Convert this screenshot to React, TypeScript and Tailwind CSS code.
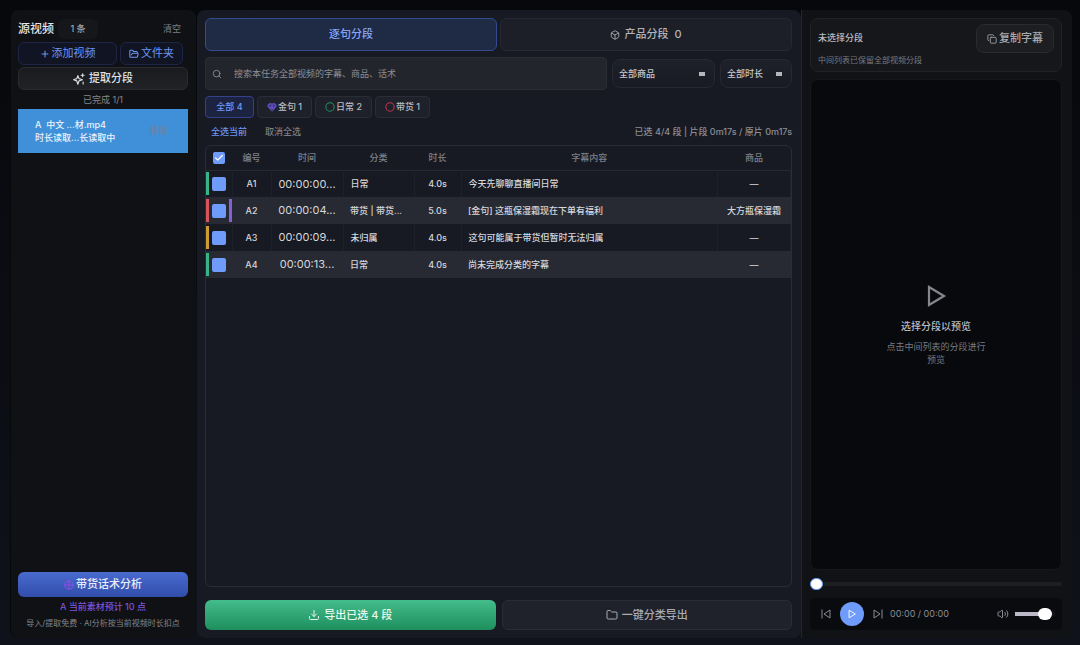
import React, { useState } from 'react';
import {
  Box,
  Check,
  Circle,
  Copy,
  Download,
  Folder,
  FolderOpen,
  Plus,
  Search,
  Volume2,
} from 'lucide-react';

interface Segment {
  id: string;
  time: string;
  category: string;
  duration: string;
  text: string;
  product: string;
  bar: string;
  golden?: boolean;
}

const SEGMENTS: Segment[] = [
  { id: 'A1', time: '00:00:00...', category: '日常', duration: '4.0s', text: '今天先聊聊直播间日常', product: '—', bar: 'bg-[#35b586]' },
  { id: 'A2', time: '00:00:04...', category: '带货 | 带货...', duration: '5.0s', text: '[金句] 这瓶保湿霜现在下单有福利', product: '大方瓶保湿霜', bar: 'bg-[#d9535a]', golden: true },
  { id: 'A3', time: '00:00:09...', category: '未归属', duration: '4.0s', text: '这句可能属于带货但暂时无法归属', product: '—', bar: 'bg-[#cc9c33]' },
  { id: 'A4', time: '00:00:13...', category: '日常', duration: '4.0s', text: '尚未完成分类的字幕', product: '—', bar: 'bg-[#35b586]' },
];

const GemIcon = () => (
  <svg viewBox="0 0 16 16" className="size-2.5" fill="#7259e0">
    <path d="M4 1.5h8L16 6l-8 9.5L0 6z" />
    <path d="M0 6.3h16M5 6l3 9 3-9M4.500 1.500 5 6l3-4.500L11 6l.5-4.500" fill="none" stroke="#2a2650" strokeWidth="1" />
  </svg>
);

const TargetIcon = () => (
  <svg viewBox="0 0 16 16" className="size-2.5" fill="none" stroke="#8f4fe6" strokeWidth="1.6">
    <circle cx="8" cy="8" r="6.8" />
    <path d="M8 1v14M1 8h14" />
  </svg>
);

const SparkleIcon = () => (
  <svg viewBox="0 0 16 16" className="size-3" fill="none" stroke="currentColor" strokeWidth="1.5" strokeLinejoin="round" strokeLinecap="round">
    <path d="M6.500 3.500 8 7.500l4.500 1.500L8 10.500 6.500 15 5 10.500.8 9 5 7.500z" />
    <path d="M12.800 1v4M10.800 3h4M13.500 12v2.500" />
  </svg>
);

const PlayIcon = ({ className }: { className: string }) => (
  <svg viewBox="0 0 24 24" className={className} fill="none" stroke="currentColor" strokeWidth="2.2">
    <path d="M5 3v18l15-9z" />
  </svg>
);

const PrevIcon = () => (
  <svg viewBox="0 0 24 24" className="size-3" fill="none" stroke="currentColor" strokeWidth="2">
    <path d="M4 3v18M20 4v16L8 12z" />
  </svg>
);

const NextIcon = () => (
  <svg viewBox="0 0 24 24" className="size-3" fill="none" stroke="currentColor" strokeWidth="2">
    <path d="M20 3v18M4 4v16l12-8z" />
  </svg>
);

const FilterSelect = ({ label, className }: { label: string; className: string }) => (
  <div className={`grid items-center ${className}`}>
    <select
      aria-label={label}
      className="col-start-1 row-start-1 h-[29px] w-full appearance-none rounded-lg border border-[#262932] bg-linear-to-b from-[#1e2129] to-[#181b23] pl-1.5 text-[9px] font-medium text-[#c6c8ce]"
    >
      <option>{label}</option>
    </select>
    <span className="pointer-events-none col-start-1 row-start-1 mr-2.5 h-1 w-1.5 justify-self-end bg-[#b4b6bc]" />
  </div>
);

const SourcePanel = () => (
  <aside className="flex w-[186px] shrink-0 flex-col rounded-lg border-l border-[#08090b] bg-[#0f1115] pt-[9px] pr-2 pl-[7px]">
    <div className="flex h-5 items-center">
      <h1 className="text-xs font-medium text-[#e4e5e9]">源视频</h1>
      <span className="ml-1 flex h-5 w-10 items-center justify-center rounded-md bg-[#15171b] text-[9px] font-medium text-[#a0a2a8]">1 条</span>
      <button className="mr-[7px] ml-auto text-[9px] text-[#7c7e85]">清空</button>
    </div>
    <div className="mt-[3px] mr-[5px] flex gap-[3px]">
      <button className="flex h-[23px] flex-1 items-center justify-center gap-0.5 rounded-md border border-[#1d2547] bg-[#111523] text-[11px] text-[#6d95f5]">
        <Plus className="size-2.5" strokeWidth={2.5} />
        添加视频
      </button>
      <button className="flex h-[23px] w-[63px] items-center justify-center gap-0.5 rounded-md border border-[#1d2547] bg-[#111523] text-[11px] text-[#6d95f5]">
        <FolderOpen className="size-2.5" strokeWidth={2.5} />
        文件夹
      </button>
    </div>
    <button className="mt-0.5 flex h-[23px] items-center justify-center gap-1 rounded-md border border-[#2a2b2e] bg-linear-to-b from-[#1a1b1e] to-[#212225] text-[11px] font-medium text-[#dfe0e3]">
      <SparkleIcon />
      提取分段
    </button>
    <p className="mt-0.5 text-center text-[9px] leading-4 text-[#85878d]">已完成 1/1</p>
    <div className="mt-px flex h-11 items-center justify-between bg-[#4090d9] pr-5 pl-[17px] text-[9px] font-medium text-[#eaf3fc]">
      <div className="leading-[13px]">
        <p className="whitespace-pre">A  中文 ...材.mp4</p>
        <p>时长读取...长读取中</p>
      </div>
      <button className="text-[#6d83a0]">移除</button>
    </div>
    <button className="mt-auto flex h-[25px] items-center justify-center gap-0.5 rounded-md bg-linear-to-b from-[#4a6bd0] to-[#304da9] text-[11px] font-medium text-[#e8ecfa]">
      <TargetIcon />
      带货话术分析
    </button>
    <p className="mt-0.5 text-center text-[9px] leading-4 font-medium text-[#7f52d8]">A 当前素材预计 10 点</p>
    <p className="mb-[7px] text-center text-[8px] leading-4 whitespace-nowrap text-[#84868c]">导入/提取免费 · AI分析按当前视频时长扣点</p>
  </aside>
);

const chipClass = 'flex h-[22px] items-center justify-center gap-px rounded border border-[#2a2d35] bg-[#1e2129] text-[9px] font-medium text-[#b9bbc2]';

const SegmentTable = () => {
  const [selected, setSelected] = useState<string[]>(SEGMENTS.map((s) => s.id));
  const allSelected = selected.length === SEGMENTS.length;

  const toggle = (id: string) => {
    setSelected(selected.includes(id) ? selected.filter((s) => s !== id) : [...selected, id]);
  };

  return (
    <div className="mt-[5px] min-h-0 flex-1 overflow-hidden rounded-md border border-[#2a2d35]">
      <table className="w-full table-fixed border-collapse text-[9px] font-medium">
        <colgroup>
          <col className="w-[26px]" />
          <col className="w-[39px]" />
          <col className="w-[72px]" />
          <col className="w-[71px]" />
          <col className="w-[47px]" />
          <col />
          <col className="w-[73px]" />
        </colgroup>
        <thead>
          <tr className="h-6 border-b border-[#262932] text-[#7e8088] *:font-medium">
            <th>
              <div className="grid place-items-center">
                <input
                  type="checkbox"
                  aria-label="全选"
                  checked={allSelected}
                  onChange={() => setSelected(allSelected ? [] : SEGMENTS.map((s) => s.id))}
                  className="col-start-1 row-start-1 size-3 appearance-none rounded-xs bg-[#3a3e4a] checked:bg-[#6f9bfa]"
                />
                {allSelected && <Check strokeWidth={3} className="pointer-events-none col-start-1 row-start-1 size-2.5 text-white" />}
              </div>
            </th>
            <th>编号</th>
            <th>时间</th>
            <th>分类</th>
            <th>时长</th>
            <th>字幕内容</th>
            <th>商品</th>
          </tr>
        </thead>
        <tbody>
          {SEGMENTS.map((s) => (
            <tr
              key={s.id}
              className="h-[27px] text-center text-[#d6d7dc] odd:*:border-r odd:*:border-[#1e2129] even:bg-[#272a33] even:*:border-transparent"
            >
              <td>
                <div className="flex items-center gap-[3px]">
                  <span className={`h-[23px] w-[3px] ${s.bar}`} />
                  <input
                    type="checkbox"
                    aria-label={s.id}
                    checked={selected.includes(s.id)}
                    onChange={() => toggle(s.id)}
                    className="size-3.5 shrink-0 appearance-none rounded-xs bg-[#3a3e4a] checked:bg-[#6f9bfa]"
                  />
                  {s.golden && <span className="h-[23px] w-[3px] shrink-0 bg-[#8560d8]" />}
                </div>
              </td>
              <td>{s.id}</td>
              <td className="text-[11px] font-normal whitespace-nowrap">{s.time}</td>
              <td className="pl-[7px] text-left whitespace-nowrap">{s.category}</td>
              <td>{s.duration}</td>
              <td className="pl-[7px] text-left">{s.text}</td>
              <td>{s.product}</td>
            </tr>
          ))}
        </tbody>
      </table>
    </div>
  );
};

const SegmentPanel = () => (
  <main className="flex min-w-0 flex-1 flex-col rounded-lg bg-[#171a22] p-2 pr-[9px]">
    <div className="grid grid-cols-2 gap-[3px] text-[11px] font-medium">
      <button className="h-[33px] rounded-md border border-[#344b8f] bg-[#1f2a44] text-[#86a4f5]">逐句分段</button>
      <button className="flex h-[33px] items-center justify-center gap-1 rounded-md border border-[#262932] bg-[#1c1f28] text-[#b2b4bb]">
        <Box className="size-2.5" />
        <span>产品分段</span>
        <span className="ml-0.5">0</span>
      </button>
    </div>
    <div className="mt-1.5 flex items-center gap-[5px]">
      <label className="flex h-[33px] min-w-0 flex-1 items-center gap-3 rounded border border-[#2b2d34] bg-[#23252c] px-1.5 text-[#92949b]">
        <Search className="size-2.5 shrink-0" />
        <input
          type="text"
          aria-label="搜索"
          placeholder="搜索本任务全部视频的字幕、商品、话术"
          className="min-w-0 flex-1 bg-transparent text-[9px] outline-none placeholder:text-[#8c8e95]"
        />
      </label>
      <FilterSelect label="全部商品" className="w-[103px]" />
      <FilterSelect label="全部时长" className="w-[72px]" />
    </div>
    <div className="mt-1.5 flex gap-[3px]">
      <button className="h-[22px] w-[49px] rounded border border-[#35418a] bg-[#1c2340] text-[9px] font-medium text-[#7599f2]">全部 4</button>
      <button className={`${chipClass} w-[55px]`}>
        <GemIcon />
        金句 1
      </button>
      <button className={`${chipClass} w-[57px]`}>
        <Circle className="size-2.5 text-[#25915f]" strokeWidth={2.5} />
        日常 2
      </button>
      <button className={`${chipClass} w-[55px]`}>
        <Circle className="size-2.5 text-[#c8344f]" strokeWidth={2.5} />
        带货 1
      </button>
    </div>
    <div className="mt-1.5 flex items-center gap-[18px] pl-1.5 text-[9px] leading-4">
      <button className="font-medium text-[#6d95f5]">全选当前</button>
      <button className="text-[#8f9198]">取消全选</button>
      <span className="ml-auto font-medium text-[#8c8e95]">已选 4/4 段 | 片段 0m17s / 原片 0m17s</span>
    </div>
    <SegmentTable />
    <div className="mt-[13px] grid grid-cols-2 gap-1.5 text-[11px] font-medium">
      <button className="flex h-[30px] items-center justify-center gap-1 rounded-md bg-linear-to-b from-[#43bd8b] to-[#1c8f5d] text-[#e6f7ef]">
        <Download className="size-3" />
        导出已选 4 段
      </button>
      <button className="flex h-[30px] items-center justify-center gap-1 rounded-md border border-[#2a2d35] bg-[#1f222b] text-[#a9abb3]">
        <Folder className="size-3" />
        一键分类导出
      </button>
    </div>
  </main>
);

const PreviewPanel = () => (
  <section className="flex w-[271px] shrink-0 flex-col rounded-r-lg border-l border-[#24262d] bg-[#101216] p-2 pr-2.5">
    <div className="flex h-[54px] items-start justify-between rounded-lg border border-[#202226] bg-[#15171b] pt-[5px] pr-[7px] pl-[7px]">
      <div className="pt-1.5">
        <h2 className="text-[9px] leading-4 font-medium text-[#b9bac0]">未选择分段</h2>
        <p className="mt-1.5 text-[8px] leading-4 text-[#777a84]">中间列表已保留全部视频分段</p>
      </div>
      <button className="flex h-[29px] w-[78px] items-center justify-center gap-0.5 rounded-lg border border-[#292b2f] bg-[#1c1e22] text-[11px] font-medium text-[#a9abb1]">
        <Copy className="size-2.5" />
        复制字幕
      </button>
    </div>
    <div className="mt-[7px] flex min-h-0 flex-1 flex-col items-center justify-center rounded-lg border border-[#15171a] bg-[#08090d] text-center">
      <PlayIcon className="size-6 text-[#85878c]" />
      <p className="mt-1.5 mb-0.5 text-[10px] leading-6 font-medium text-[#b9bbc1]">选择分段以预览</p>
      <p className="w-[104px] text-[9px] leading-[13px] text-[#777a82]">点击中间列表的分段进行预览</p>
    </div>
    <input
      type="range"
      aria-label="进度"
      min={0}
      max={100}
      defaultValue={0}
      className="mt-2 h-3 w-full appearance-none bg-transparent [&::-webkit-slider-runnable-track]:h-1 [&::-webkit-slider-runnable-track]:rounded-full [&::-webkit-slider-runnable-track]:bg-[#1c1e22] [&::-webkit-slider-thumb]:-mt-1 [&::-webkit-slider-thumb]:h-3 [&::-webkit-slider-thumb]:w-[13px] [&::-webkit-slider-thumb]:appearance-none [&::-webkit-slider-thumb]:rounded-full [&::-webkit-slider-thumb]:border [&::-webkit-slider-thumb]:border-[#6f9bfa] [&::-webkit-slider-thumb]:bg-white"
    />
    <div className="mt-2 flex h-8 items-center rounded bg-[#0a0b0f] pr-[7px] pl-2.5 text-[#8b8d93]">
      <button aria-label="上一段"><PrevIcon /></button>
      <button aria-label="播放" className="ml-2 grid size-6 place-items-center rounded-full bg-[#6f9bfa] text-white">
        <PlayIcon className="size-2.5" />
      </button>
      <button aria-label="下一段" className="ml-2"><NextIcon /></button>
      <span className="ml-1.5 text-[9px]">00:00 / 00:00</span>
      <Volume2 className="ml-auto size-3" />
      <input
        type="range"
        aria-label="音量"
        min={0}
        max={100}
        defaultValue={88}
        className="ml-1.5 h-3 w-10 appearance-none bg-transparent [&::-webkit-slider-runnable-track]:h-1 [&::-webkit-slider-runnable-track]:bg-linear-to-r [&::-webkit-slider-runnable-track]:from-[#bdb8c9] [&::-webkit-slider-runnable-track]:from-85% [&::-webkit-slider-runnable-track]:to-[#15161a] [&::-webkit-slider-runnable-track]:to-85% [&::-webkit-slider-thumb]:-mt-1 [&::-webkit-slider-thumb]:h-3 [&::-webkit-slider-thumb]:w-3.5 [&::-webkit-slider-thumb]:appearance-none [&::-webkit-slider-thumb]:rounded-full [&::-webkit-slider-thumb]:bg-white"
      />
    </div>
  </section>
);

const App: React.FC = () => {
  return (
    <div className="flex h-screen bg-linear-to-b from-[#07080b] to-[#10121b] px-2.5 pt-2.5 pr-2 pb-[7px] font-['Inter','Noto_Sans_CJK_SC',sans-serif]">
      <SourcePanel />
      <div className="w-px" />
      <SegmentPanel />
      <PreviewPanel />
    </div>
  );
};

export default App;
